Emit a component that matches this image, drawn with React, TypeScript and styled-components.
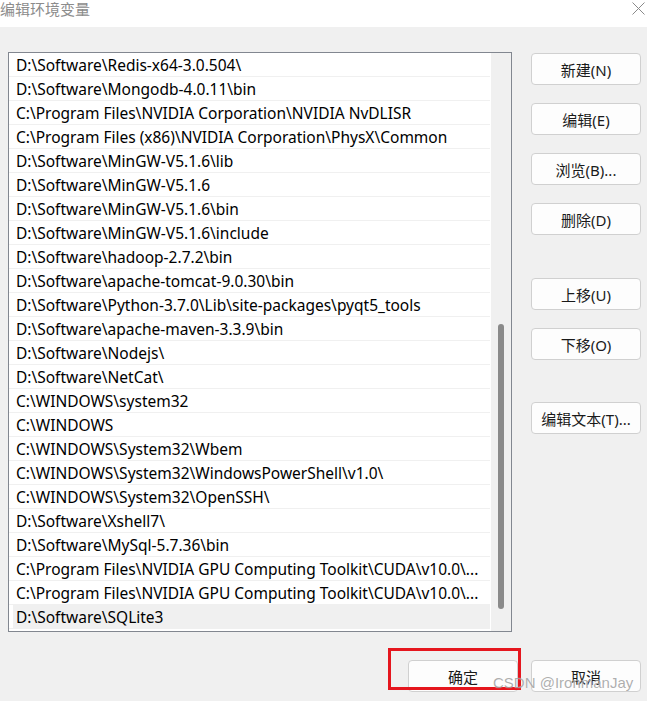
import React from "react";
import styled, { createGlobalStyle } from "styled-components";

const Global = createGlobalStyle`
  html, body { margin: 0; padding: 0; background: #f0f0f0; overflow: hidden; }
  * { box-sizing: border-box; }
`;

const FONT = `"Noto Sans", "Noto Sans CJK SC", sans-serif`;

const Window = styled.div`
  position: relative;
  width: 647px;
  height: 701px;
  background: #f0f0f0;
  display: flex;
  flex-direction: column;
  font-family: ${FONT};
  color: #000;
`;

const TitleBar = styled.div`
  height: 27px;
  background: #fff;
  display: flex;
  justify-content: space-between;
  align-items: flex-start;
`;

const Title = styled.div`
  font-size: 15px;
  line-height: 17px;
  color: #8c8c8c;
  font-family: "Noto Sans CJK SC", sans-serif;
`;

const CloseIcon = styled.svg`
  margin: 2px 2px 0 0;
  width: 13px;
  height: 13px;
`;

const Body = styled.div`
  display: flex;
  padding: 25px 6px 0 8px;
`;

const ListBox = styled.div`
  width: 504px;
  height: 580px;
  border: 1px solid #828790;
  background: #fff;
  display: flex;
`;

const Rows = styled.div`
  width: 481px;
  display: flex;
  flex-direction: column;
`;

const Row = styled.div<{ $selected?: boolean }>`
  height: 24px;
  border-bottom: 1px solid #f0f0f0;
  padding-left: 7px;
  font-size: 15.5px;
  line-height: 24px;
  white-space: nowrap;
  overflow: hidden;
  background: ${(p) =>
    p.$selected ? "linear-gradient(to right, #fff 4px, #f0f0f0 4px)" : "#fff"};
`;

const Track = styled.div`
  width: 20px;
  margin-left: 1px;
  background: #f0f0f0;
  display: flex;
  flex-direction: column;
  align-items: center;
`;

const Thumb = styled.div<{ $top: number; $height: number }>`
  margin-top: ${(p) => p.$top}px;
  width: 6px;
  height: ${(p) => p.$height}px;
  border-radius: 3px;
  background: #8a8a8a;
`;

const SideButtons = styled.div`
  margin-left: 19px;
  padding-top: 1px;
  display: flex;
  flex-direction: column;
`;

const Btn = styled.div<{ $gap?: number }>`
  width: 110px;
  height: 32px;
  margin-top: ${(p) => p.$gap ?? 0}px;
  background: #fdfdfd;
  border: 1px solid #d0d0d0;
  border-radius: 4px;
  display: flex;
  align-items: center;
  justify-content: center;
  font-size: 15px;
  font-family: ${FONT};
  color: #1a1a1a;
`;

const Footer = styled.div`
  display: flex;
  justify-content: flex-end;
  gap: 13px;
  padding: 28px 6px 0 0;
`;

const Highlighted = styled.div`
  position: relative;
`;

const RedBox = styled.div`
  position: absolute;
  left: -20px;
  top: -12px;
  width: 133px;
  height: 42px;
  border: 3px solid #e5161e;
  pointer-events: none;
`;

const Watermark = styled.div`
  position: absolute;
  left: 493px;
  top: 674px;
  font-family: "Liberation Sans", Arial, sans-serif;
  font-size: 15px;
  line-height: 18px;
  color: rgba(120, 120, 120, 0.6);
  text-shadow: 0 0 1px rgba(255, 255, 255, 0.8);
  white-space: nowrap;
`;

const paths = [
  "D:\\Software\\Redis-x64-3.0.504\\",
  "D:\\Software\\Mongodb-4.0.11\\bin",
  "C:\\Program Files\\NVIDIA Corporation\\NVIDIA NvDLISR",
  "C:\\Program Files (x86)\\NVIDIA Corporation\\PhysX\\Common",
  "D:\\Software\\MinGW-V5.1.6\\lib",
  "D:\\Software\\MinGW-V5.1.6",
  "D:\\Software\\MinGW-V5.1.6\\bin",
  "D:\\Software\\MinGW-V5.1.6\\include",
  "D:\\Software\\hadoop-2.7.2\\bin",
  "D:\\Software\\apache-tomcat-9.0.30\\bin",
  "D:\\Software\\Python-3.7.0\\Lib\\site-packages\\pyqt5_tools",
  "D:\\Software\\apache-maven-3.3.9\\bin",
  "D:\\Software\\Nodejs\\",
  "D:\\Software\\NetCat\\",
  "C:\\WINDOWS\\system32",
  "C:\\WINDOWS",
  "C:\\WINDOWS\\System32\\Wbem",
  "C:\\WINDOWS\\System32\\WindowsPowerShell\\v1.0\\",
  "C:\\WINDOWS\\System32\\OpenSSH\\",
  "D:\\Software\\Xshell7\\",
  "D:\\Software\\MySql-5.7.36\\bin",
  "C:\\Program Files\\NVIDIA GPU Computing Toolkit\\CUDA\\v10.0\\...",
  "C:\\Program Files\\NVIDIA GPU Computing Toolkit\\CUDA\\v10.0\\...",
  "D:\\Software\\SQLite3",
];

export default function App() {
  return (
    <>
      <Global />
      <Window>
        <TitleBar>
          <Title>编辑环境变量</Title>
          <CloseIcon viewBox="0 0 13 13">
            <path d="M0.5 0.5 L12.5 12.5 M12.5 0.5 L0.5 12.5" stroke="#8a8a8a" strokeWidth="1" fill="none" />
          </CloseIcon>
        </TitleBar>
        <Body>
          <ListBox>
            <Rows>
              {paths.map((p, i) => (
                <Row key={i} $selected={i === paths.length - 1}>
                  {p}
                </Row>
              ))}
            </Rows>
            <Track>
              <Thumb $top={271} $height={285} />
            </Track>
          </ListBox>
          <SideButtons>
            <Btn>新建(N)</Btn>
            <Btn $gap={18}>编辑(E)</Btn>
            <Btn $gap={18}>浏览(B)...</Btn>
            <Btn $gap={18}>删除(D)</Btn>
            <Btn $gap={43}>上移(U)</Btn>
            <Btn $gap={18}>下移(O)</Btn>
            <Btn $gap={42}>编辑文本(T)...</Btn>
          </SideButtons>
        </Body>
        <Footer>
          <Highlighted>
            <Btn>确定</Btn>
            <RedBox />
          </Highlighted>
          <Btn>取消</Btn>
        </Footer>
        <Watermark>CSDN @IronmanJay</Watermark>
      </Window>
    </>
  );
}
